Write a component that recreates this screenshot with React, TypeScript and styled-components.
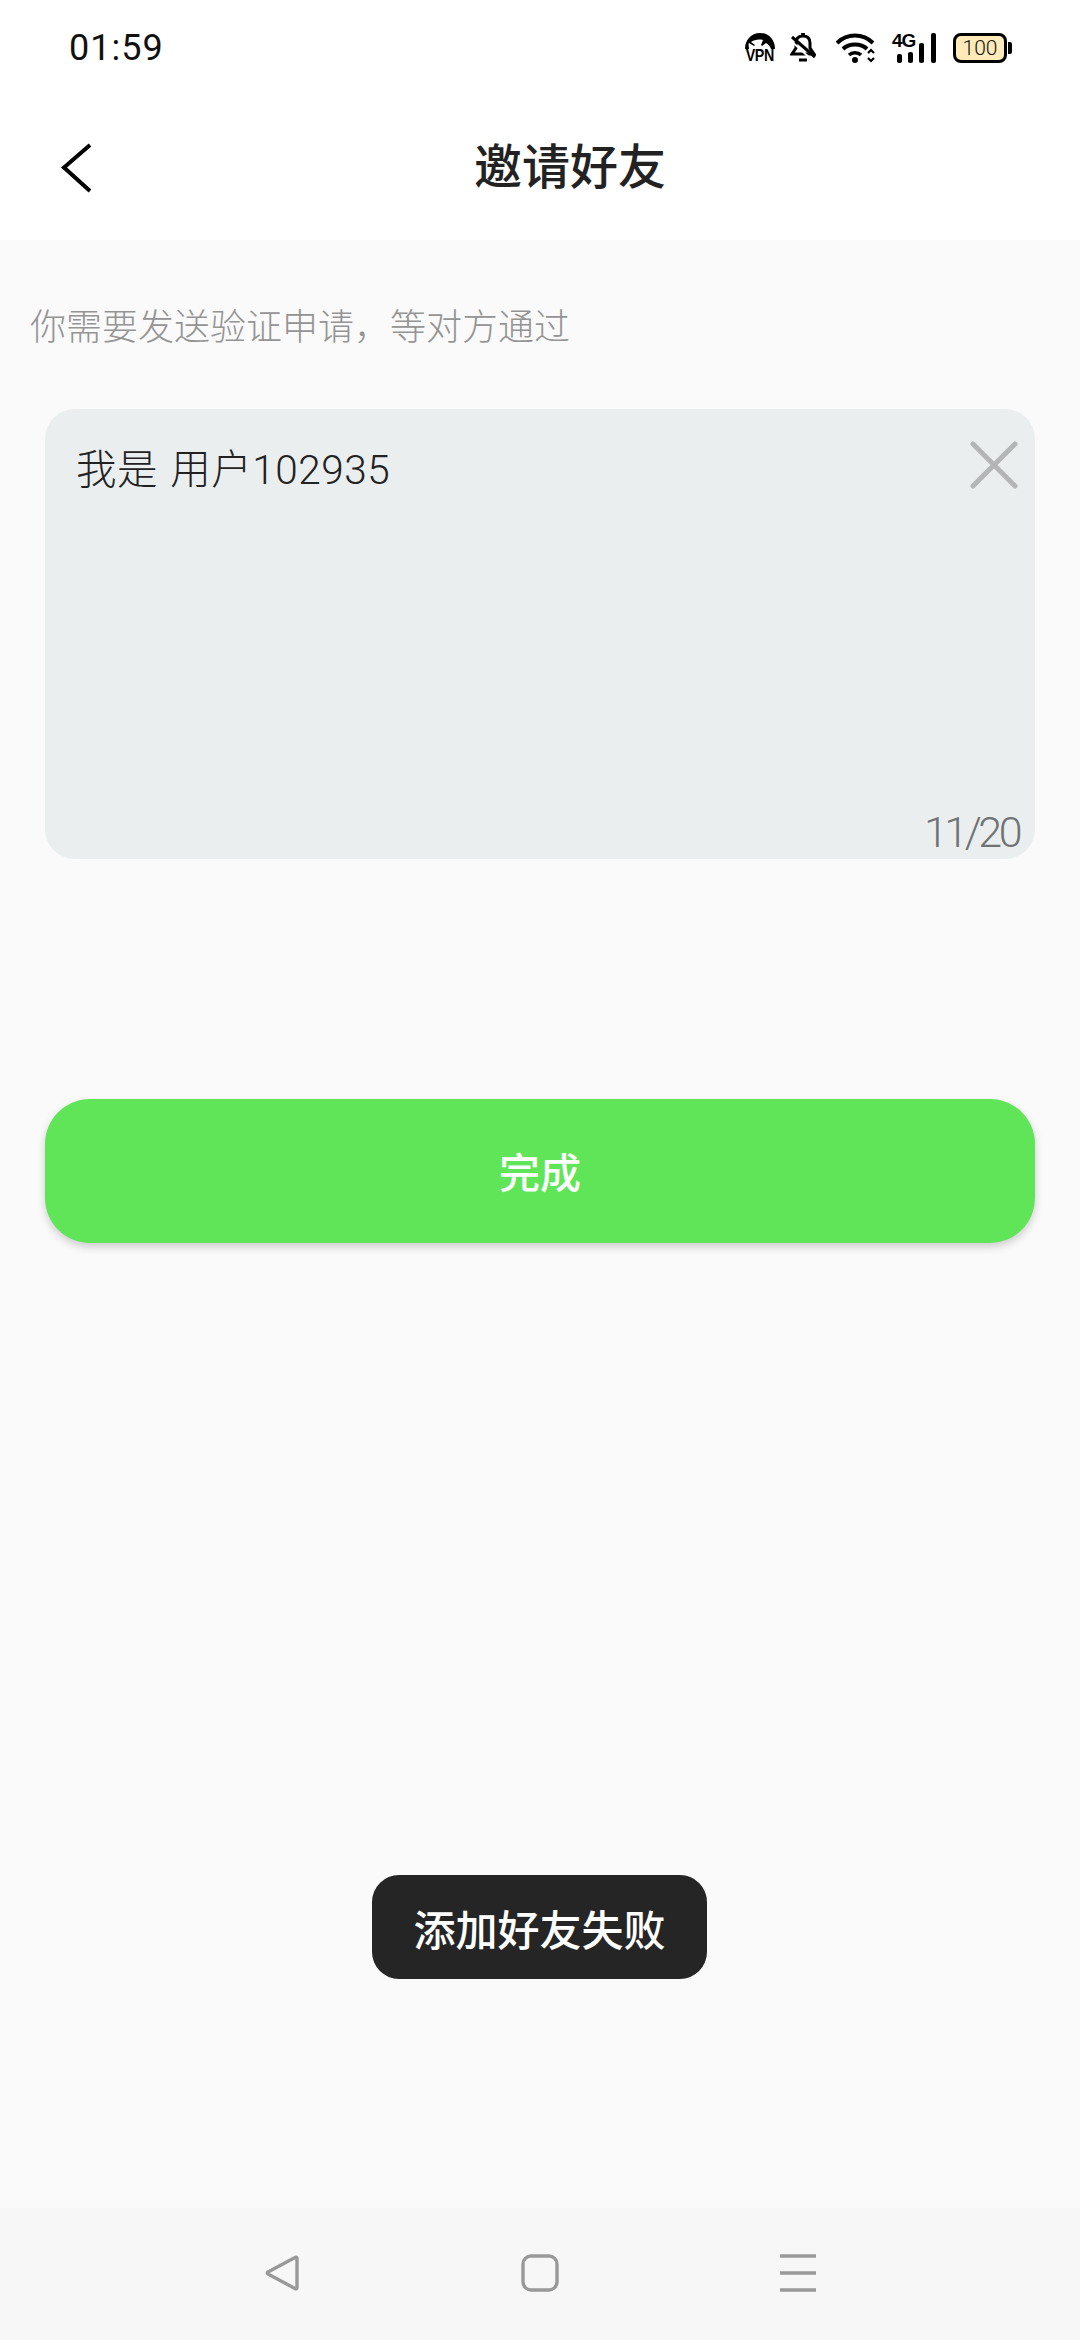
import React from 'react';
import styled, { createGlobalStyle } from 'styled-components';

const GlobalStyle = createGlobalStyle`
  html, body {
    margin: 0;
    padding: 0;
    background: #fafafa;
    font-family: Roboto, "Noto Sans CJK SC", sans-serif;
  }
  * {
    box-sizing: border-box;
  }
`;

const Page = styled.div`
  width: 1080px;
  height: 2340px;
  display: flex;
  flex-direction: column;
  position: relative;
  overflow: hidden;
  background: #fafafa;
`;

const StatusBar = styled.div`
  height: 90px;
  background: #fff;
  display: flex;
  align-items: flex-start;
  justify-content: space-between;
  padding: 33px 68px 0 69px;
`;

const Clock = styled.span`
  font-size: 36px;
  line-height: 30px;
  letter-spacing: 1px;
  color: #111;
`;

const StatusIcons = styled.div`
  display: flex;
  align-items: flex-start;
`;

const VpnBadge = styled.div`
  width: 30px;
  height: 30px;
  display: flex;
  flex-direction: column;
  align-items: center;
  margin-right: 15px;
`;

const VpnLabel = styled.span`
  font-family: "Liberation Sans", sans-serif;
  font-size: 17px;
  line-height: 14px;
  font-weight: 700;
  color: #000;
  letter-spacing: -0.5px;
  transform: scaleX(0.84);
`;

const IconSlot = styled.div<{ $width: number; $gap: number }>`
  width: ${props => props.$width}px;
  height: 30px;
  margin-right: ${props => props.$gap}px;
  position: relative;
`;

const NetworkLabel = styled.span`
  position: absolute;
  left: 0;
  top: -1px;
  font-family: "Liberation Sans", sans-serif;
  font-size: 19px;
  line-height: 18px;
  font-weight: 700;
  letter-spacing: -1px;
  color: #000;
`;

const Battery = styled.div`
  display: flex;
  align-items: center;
  height: 30px;
`;

const BatteryBody = styled.div`
  width: 54px;
  height: 30px;
  border: 3px solid #000;
  border-radius: 8px;
  background: #fdeab8;
  display: flex;
  align-items: center;
  justify-content: center;
  font-size: 21px;
  font-weight: 300;
  color: #111;
`;

const BatteryNub = styled.div`
  width: 4px;
  height: 12px;
  margin-left: 1px;
  border-radius: 0 2px 2px 0;
  background: #000;
`;

const Header = styled.div`
  height: 150px;
  background: #fff;
  display: flex;
  align-items: center;
  padding: 6px 0 0 59px;
`;

const BackIcon = styled.svg`
  width: 34px;
  height: 50px;
`;

const Title = styled.h1`
  margin: 0 0 0 381px;
  font-size: 48px;
  line-height: 60px;
  font-weight: 500;
  color: #222;
`;

const Content = styled.main`
  flex: 1;
  display: flex;
  flex-direction: column;
  background: #fafafa;
`;

const Hint = styled.p`
  margin: 63px 0 0 30px;
  font-size: 36px;
  line-height: 50px;
  font-weight: 300;
  color: #949494;
`;

const MessageCard = styled.div`
  position: relative;
  height: 450px;
  margin: 56px 45px 0;
  padding: 34px 31px;
  border-radius: 30px;
  background: #ebeeef;
`;

const MessageText = styled.div`
  font-size: 40.5px;
  line-height: 54px;
  font-weight: 300;
  letter-spacing: 0.5px;
  word-spacing: 2px;
  color: #222;
`;

const ClearIcon = styled.svg`
  position: absolute;
  top: 32px;
  right: 17px;
  width: 48px;
  height: 48px;
`;

const Counter = styled.span`
  position: absolute;
  right: 16px;
  bottom: 2px;
  font-size: 43px;
  line-height: 50px;
  font-weight: 300;
  letter-spacing: -3.5px;
  color: #6f7375;
`;

const DoneButton = styled.button`
  height: 144px;
  margin: 240px 45px 0;
  border: 0;
  border-radius: 45px;
  background: #60e558;
  box-shadow: 0 4px 8px rgba(0, 0, 0, 0.18);
  color: #fff;
  font-family: inherit;
  font-size: 41px;
  font-weight: 500;
  padding-bottom: 3px;
`;

const Toast = styled.div`
  position: absolute;
  left: 372px;
  top: 1875px;
  width: 335px;
  height: 104px;
  display: flex;
  align-items: center;
  justify-content: center;
  border-radius: 27px;
  background: #252525;
  color: #fff;
  font-size: 42px;
  font-weight: 500;
`;

const NavBar = styled.nav`
  height: 132px;
  background: #f7f7f7;
  display: flex;
  align-items: flex-start;
  padding: 46px 263px 0 263px;
  justify-content: space-between;
`;

const NavIcon = styled.svg`
  width: 38px;
  height: 38px;
  fill: none;
  stroke: #999;
  stroke-width: 3.4;
  stroke-linejoin: round;
`;

const App: React.FC = () => (
  <Page>
    <GlobalStyle />
    <StatusBar>
      <Clock>01:59</Clock>
      <StatusIcons>
        <VpnBadge>
          <svg width="30" height="16" viewBox="0 0 30 16">
            <path d="M0 16C0 7 6 0 15 0s15 7 15 16h-4c-1-3-3-5-5-6l-4 3-1-1 2-5c-5-1-9 0-12 2l4 3-1 1-5-3C3 11 4 14 4 16z" fill="#000" />
          </svg>
          <VpnLabel>VPN</VpnLabel>
        </VpnBadge>
        <IconSlot $width={26} $gap={20}>
          <svg width="26" height="30" viewBox="0 0 26 30" fill="none" stroke="#000" strokeWidth="3">
            <path d="M11 1.500h4M6 10c0-5 3-7 7-7s7 2 7 7v5l4 6H2l4-6z" />
            <path d="M9 27h8M2 4l23 20" />
            <path d="M0 7l22 20" stroke="#fff" strokeWidth="2" />
          </svg>
        </IconSlot>
        <IconSlot $width={40} $gap={16}>
          <svg width="40" height="30" viewBox="0 0 40 30" fill="none" stroke="#000" strokeWidth="4">
            <path d="M1 10C11 0 27 0 37 10" />
            <path d="M7 16c6-6 18-6 24 0" />
            <path d="M13 22c3-3 9-3 12 0" strokeWidth="3.500" />
            <circle cx="19" cy="27" r="3" fill="#000" stroke="none" />
            <path d="M32 20l3-3 3 3M32 25l3 3 3-3" strokeWidth="2.200" />
          </svg>
        </IconSlot>
        <IconSlot $width={44} $gap={17}>
          <NetworkLabel>4G</NetworkLabel>
          <svg width="44" height="30" viewBox="0 0 44 30" fill="#000">
            <rect x="5" y="21" width="5" height="9" rx="2" />
            <rect x="16" y="19" width="5" height="11" rx="2" />
            <rect x="27" y="10" width="5" height="20" rx="2" />
            <rect x="39" y="0" width="5" height="30" rx="2" />
          </svg>
        </IconSlot>
        <Battery>
          <BatteryBody>100</BatteryBody>
          <BatteryNub />
        </Battery>
      </StatusIcons>
    </StatusBar>
    <Header>
      <BackIcon viewBox="0 0 34 50" fill="none" stroke="#000" strokeWidth="4">
        <path d="M31 2L5 24.500 31 48" />
      </BackIcon>
      <Title>邀请好友</Title>
    </Header>
    <Content>
      <Hint>你需要发送验证申请，等对方通过</Hint>
      <MessageCard>
        <MessageText>我是 用户102935</MessageText>
        <ClearIcon viewBox="0 0 48 48" fill="none" stroke="#b3b5b6" strokeWidth="5" strokeLinecap="round">
          <path d="M3 3l42 42M45 3L3 45" />
        </ClearIcon>
        <Counter>11/20</Counter>
      </MessageCard>
      <DoneButton>完成</DoneButton>
    </Content>
    <NavBar>
      <NavIcon viewBox="0 0 38 38">
        <path d="M32 3.500c1-.6 2-.1 2 1v29c0 1.200-1 1.700-2 1L5 20c-1-.6-1-1.400 0-2z" />
      </NavIcon>
      <NavIcon viewBox="0 0 38 38">
        <rect x="2" y="2" width="34" height="34" rx="8" />
      </NavIcon>
      <NavIcon viewBox="0 0 38 38">
        <path d="M1 2h36M1 19h36M1 36h36" />
      </NavIcon>
    </NavBar>
    <Toast>添加好友失败</Toast>
  </Page>
);

export default App;
